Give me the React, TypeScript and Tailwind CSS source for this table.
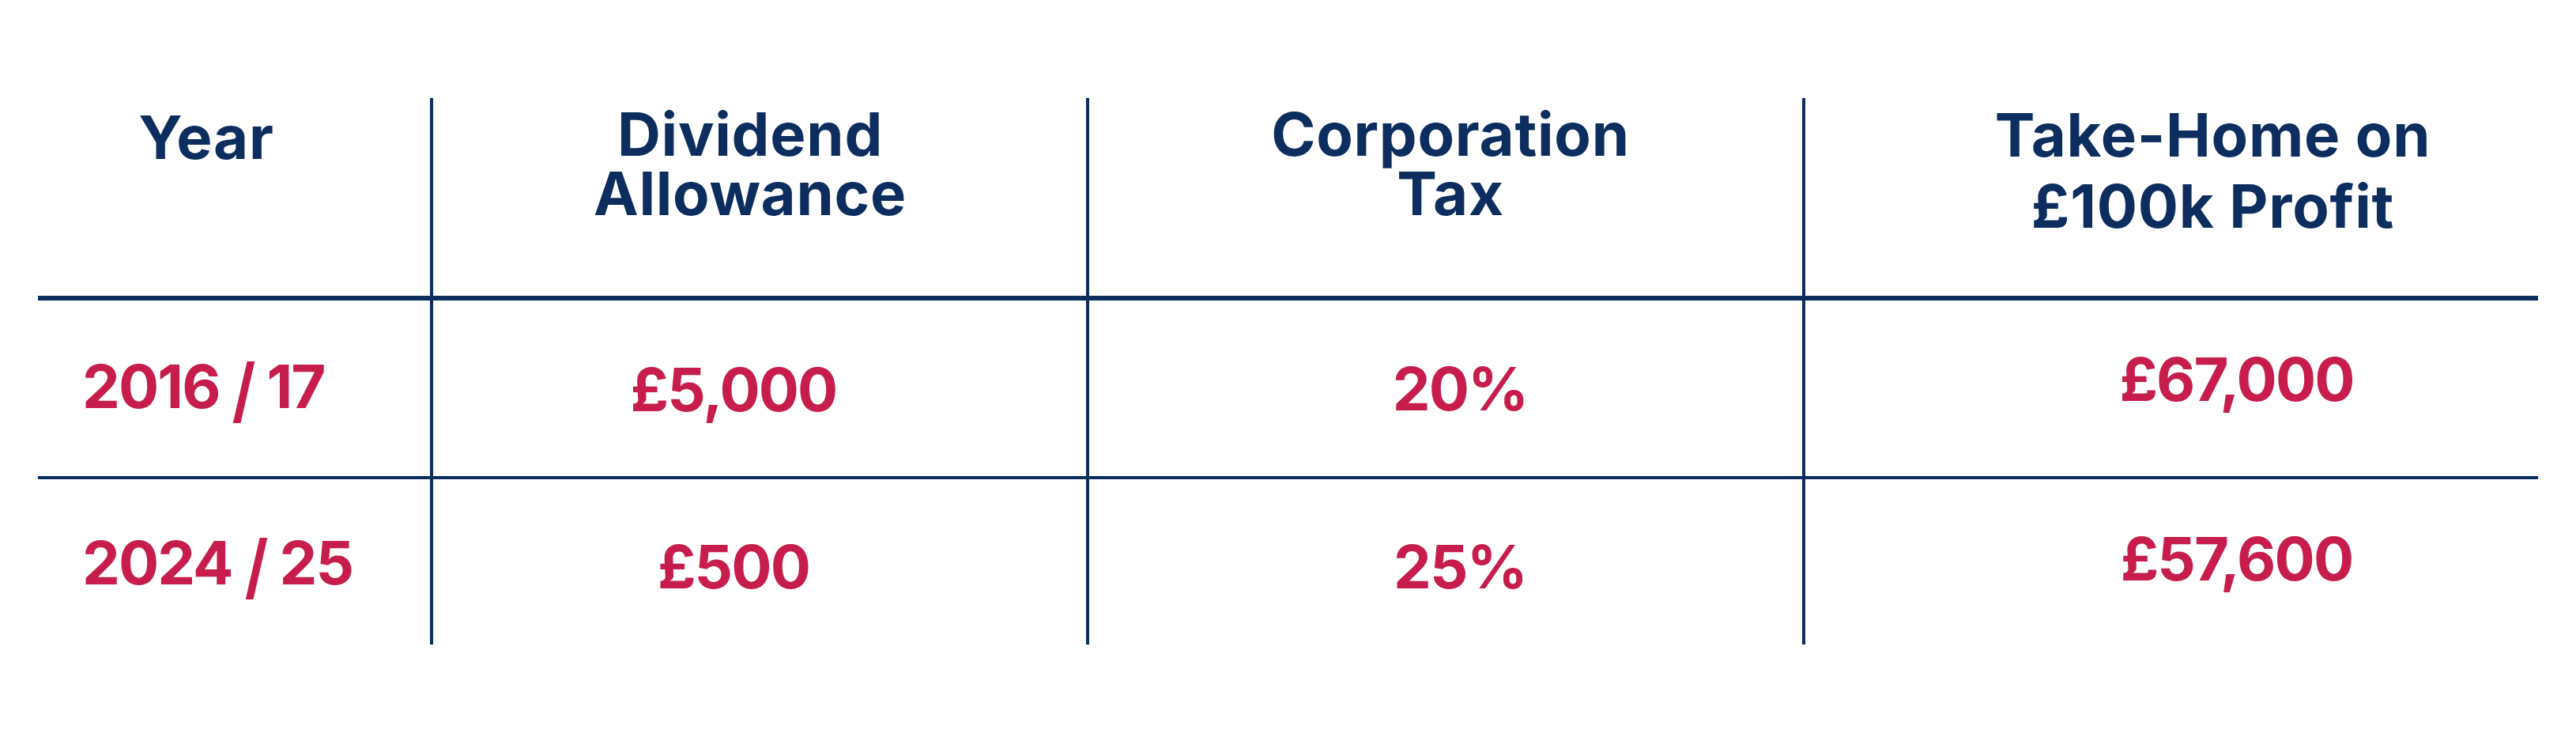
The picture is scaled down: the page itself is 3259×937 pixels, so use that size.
import React from 'react';

const NAVY = 'text-[#0c2d5e]';
const RED = 'text-[#c71d4d]';

// pads tuned per cell so baselines sit where the source graphic has them
const rows = [
  {
    h: 'h-[226px] border-b-[4px]',
    cells: [
      { text: '2016 / 17', cls: 'pl-[56px] pt-[70px]' },
      { text: '£5,000', cls: 'justify-center pr-[66px] pt-[74px]' },
      { text: '20%', cls: 'justify-center pl-[36px] pt-[73px]' },
      { text: '£67,000', cls: 'justify-center pl-[164px] pt-[61px]' },
    ],
  },
  {
    h: 'h-[209px]',
    cells: [
      { text: '2024 / 25', cls: 'pl-[56px] pt-[67px]' },
      { text: '£500', cls: 'justify-center pr-[66px] pt-[72px]' },
      { text: '25%', cls: 'justify-center pl-[36px] pt-[72px]' },
      { text: '£57,600', cls: 'justify-center pl-[164px] pt-[62px]' },
    ],
  },
];

const Slashed: React.FC<{ text: string }> = ({ text }) => {
  const parts = text.split('/');
  if (parts.length < 2) return <>{text}</>;
  return (
    <>
      {parts[0]}
      <span className="inline-block scale-y-[1.18] translate-y-[4px]">/</span>
      {parts[1]}
    </>
  );
};

const App: React.FC = () => {
  return (
    <div className="w-[3259px] h-[937px] bg-white px-[48px] pt-[124px] font-['Inter','Liberation_Sans',sans-serif]">
      <div className="grid grid-cols-[496px_830px_906px_931px]">
        {/* header */}
        <div className="h-[256px] border-b-[6px] border-[#0c2d5e] flex justify-center pr-[70px] pt-[12px]">
          <h3 className={`${NAVY} text-[76px] font-bold leading-[75px] tracking-[0.01em]`}>Year</h3>
        </div>
        <div className="h-[256px] border-b-[6px] border-l-[4px] border-[#0c2d5e] flex justify-center pr-[24px] pt-[8px]">
          <h3 className={`${NAVY} text-[76px] font-bold leading-[75px] tracking-[0.01em] text-center`}>
            <span className="block">Dividend</span>
            <span className="block">Allowance</span>
          </h3>
        </div>
        <div className="h-[256px] border-b-[6px] border-l-[4px] border-[#0c2d5e] flex justify-center pl-[12px] pt-[8px]">
          <h3 className={`${NAVY} text-[76px] font-bold leading-[75px] tracking-[0.01em] text-center`}>
            <span className="block">Corporation</span>
            <span className="block">Tax</span>
          </h3>
        </div>
        <div className="h-[256px] border-b-[6px] border-l-[4px] border-[#0c2d5e] flex justify-center pl-[104px] pt-[1px]">
          <h3 className={`${NAVY} text-[76px] font-bold leading-[90px] tracking-[0.01em] text-center`}>
            <span className="block">Take-Home on</span>
            <span className="block">£100k Profit</span>
          </h3>
        </div>

        {/* rows */}
        {rows.map((r, i) => (
          <React.Fragment key={i}>
            {r.cells.map((c, j) => (
              <div
                key={j}
                className={`${r.h} ${j > 0 ? 'border-l-[4px]' : ''} border-[#0c2d5e] flex items-start ${c.cls}`}
              >
                <span className={`${RED} text-[76px] font-bold leading-none tracking-tight whitespace-nowrap`}>
                  <Slashed text={c.text} />
                </span>
              </div>
            ))}
          </React.Fragment>
        ))}
      </div>
    </div>
  );
};

export default App;
